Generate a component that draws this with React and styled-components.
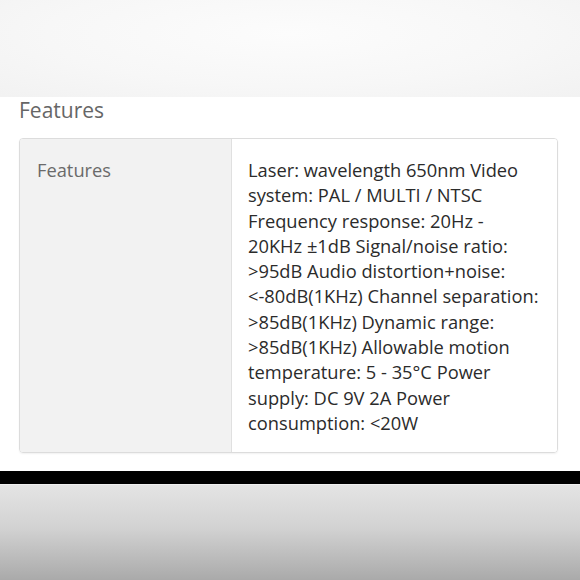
import React from "react";
import styled, { createGlobalStyle } from "styled-components";

const GlobalStyle = createGlobalStyle`
  html, body {
    margin: 0;
    padding: 0;
    background: #ffffff;
  }
  body {
    font-family: "Open Sans", "Liberation Sans", sans-serif;
  }
`;

const SPECS =
  "Laser: wavelength 650nm Video system: PAL / MULTI / NTSC Frequency response: 20Hz - 20KHz ±1dB Signal/noise ratio: >95dB Audio distortion+noise: <-80dB(1KHz) Channel separation: >85dB(1KHz) Dynamic range: >85dB(1KHz) Allowable motion temperature: 5 - 35°C Power supply: DC 9V 2A Power consumption: <20W";

const Screen = styled.div`
  width: 580px;
  height: 580px;
  display: flex;
  flex-flow: column nowrap;
  overflow: hidden;
`;

const TopFade = styled.div`
  height: 97px;
  flex: none;
  background: radial-gradient(ellipse 70% 90% at 50% 35%, #fcfcfc 0%, #f7f7f7 60%, #f2f2f2 100%);
`;

const Section = styled.section`
  flex: 1;
  display: flex;
  flex-flow: column nowrap;
  padding: 0 22px 18px 19px;
  background: #ffffff;
`;

const Heading = styled.h2`
  margin: 0 0 15px;
  font-size: 21px;
  line-height: 26px;
  font-weight: 400;
  color: #666666;
`;

const SpecTable = styled.div`
  display: grid;
  grid-template-columns: 212px 1fr;
  border: 1px solid #dcdcdc;
  border-radius: 4px;
  overflow: hidden;
  box-shadow: 0 1px 2px rgba(0, 0, 0, 0.06);
`;

const Cell = styled.div`
  padding: 18px 17px 17px ${({ label }) => (label ? "17px" : "16px")};
  font-size: 18.3px;
  line-height: 25.3px;
  background: ${({ label }) => (label ? "#f2f2f2" : "#ffffff")};
  color: ${({ label }) => (label ? "#6a6a6a" : "#2b2b2b")};
  border-right: ${({ label }) => (label ? "1px solid #e0e0e0" : "none")};
`;

const Bar = styled.div`
  height: 13px;
  flex: none;
  background: #000000;
  border-bottom: 1px solid #f0f0f0;
`;

const BottomFade = styled.div`
  height: 96px;
  flex: none;
  background: linear-gradient(180deg, #e4e4e4 0%, #d2d2d2 45%, #a9a9a9 100%);
`;

function App() {
  return (
    <>
      <GlobalStyle />
      <Screen>
        <TopFade />
        <Section>
          <Heading>Features</Heading>
          <SpecTable>
            <Cell label>Features</Cell>
            <Cell>{SPECS}</Cell>
          </SpecTable>
        </Section>
        <Bar />
        <BottomFade />
      </Screen>
    </>
  );
}

export default App;
